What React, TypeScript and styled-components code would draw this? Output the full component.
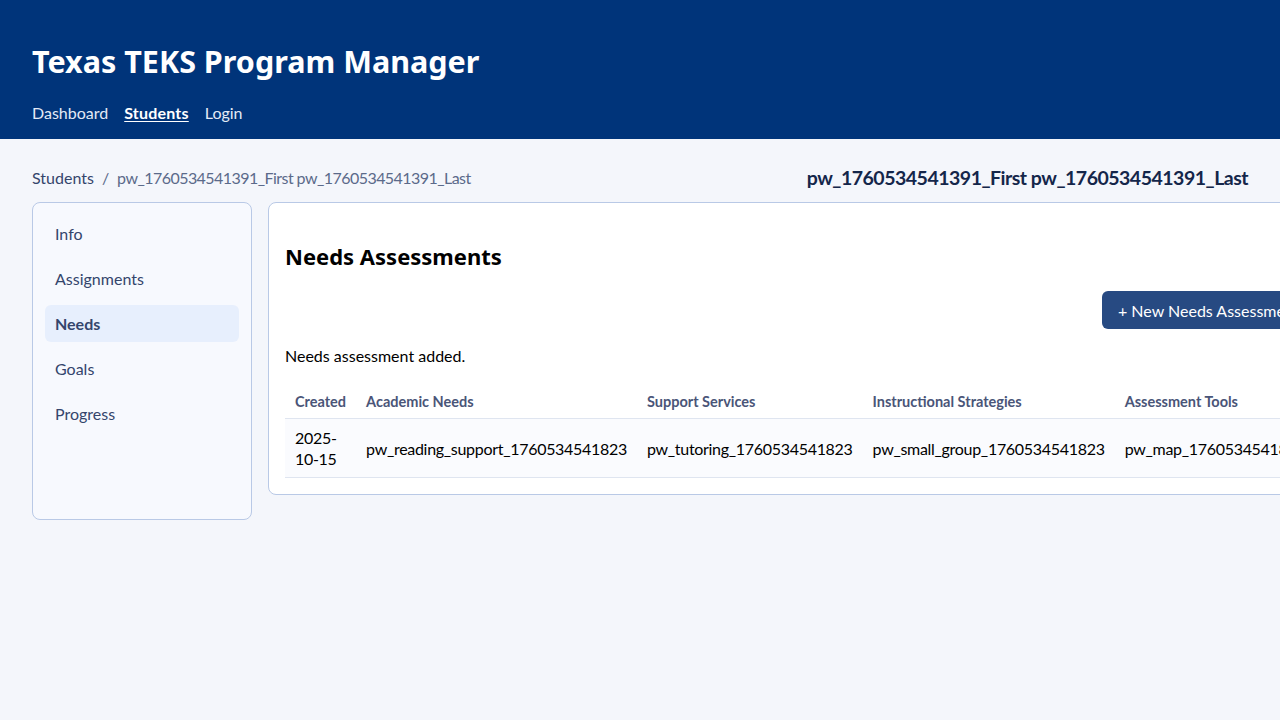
import React from "react";
import styled, { createGlobalStyle } from "styled-components";

const Global = createGlobalStyle`
  html, body { margin: 0; padding: 0; overflow-x: hidden; }
  body {
    background: #f4f6fb;
    font-family: "Segoe UI", Lato, "Noto Sans", sans-serif;
    color: #000;
  }
  * { box-sizing: border-box; }
`;

const Header = styled.header`
  background: #00347a;
  color: #fff;
  padding: 41px 32px 15px;
`;

const Title = styled.h1`
  margin: 0 0 21px;
  font-family: "Segoe UI", "Noto Sans", sans-serif;
  font-size: 30.5px;
  line-height: 40px;
  font-weight: 700;
`;

const Nav = styled.nav`
  display: flex;
  gap: 16px;
  font-size: 16px;
  line-height: 22px;
`;

const NavLink = styled.a<{ $active?: boolean }>`
  color: ${(p) => (p.$active ? "#fff" : "#e3eaf6")};
  text-decoration: ${(p) => (p.$active ? "underline" : "none")};
  text-underline-offset: 2px;
  font-weight: ${(p) => (p.$active ? 700 : 400)};
  letter-spacing: ${(p) => (p.$active ? "0.2px" : "0")};
`;

const Container = styled.div`
  padding: 24px 32px;
`;

const TopRow = styled.div`
  display: flex;
  justify-content: space-between;
  align-items: center;
  height: 28px;
  margin-bottom: 11px;
`;

const Crumbs = styled.div`
  display: flex;
  gap: 8px;
  font-size: 16px;
  color: #5b6a8a;
`;

const CrumbLink = styled.span`
  color: #34456c;
`;

const CrumbCurrent = styled.span`
  letter-spacing: -0.55px;
`;

const StudentName = styled.div`
  font-size: 19.5px;
  font-weight: 700;
  letter-spacing: -0.5px;
  color: #14264a;
`;

const Layout = styled.div`
  display: grid;
  grid-template-columns: 220px 1fr;
  gap: 16px;
  align-items: start;
`;

const Sidebar = styled.aside`
  background: #f7f9fe;
  border: 1px solid #b9c9e6;
  border-radius: 8px;
  padding: 12px;
  min-height: 318px;
  display: flex;
  flex-direction: column;
  gap: 8px;
`;

const SideItem = styled.div<{ $active?: boolean }>`
  padding: 7px 10px;
  line-height: 23px;
  font-size: 16px;
  border-radius: 6px;
  color: #34456c;
  background: ${(p) => (p.$active ? "#e7effd" : "transparent")};
  font-weight: ${(p) => (p.$active ? 700 : 400)};
`;

const Card = styled.section`
  background: #fff;
  border: 1px solid #b9c9e6;
  border-radius: 8px;
  padding: 16px;
`;

const CardTitle = styled.h2`
  margin: 21px 0 19px;
  font-family: "Segoe UI", "Noto Sans", sans-serif;
  font-size: 22px;
  line-height: 32px;
  font-weight: 700;
`;

const Actions = styled.div`
  display: flex;
  justify-content: flex-end;
  margin-bottom: 16px;
`;

const Button = styled.button`
  background: #274a82;
  color: #fff;
  border: none;
  border-radius: 6px;
  padding: 0 16px;
  height: 38px;
  font: inherit;
  font-size: 16px;
`;

const Message = styled.p`
  margin: 0 0 18px;
  font-size: 16px;
  line-height: 22px;
`;

const Table = styled.table`
  width: 100%;
  border-collapse: collapse;
`;

const Th = styled.th`
  text-align: left;
  font-size: 14.5px;
  font-weight: 700;
  color: #4a5578;
  padding: 8px 10px;
  line-height: 17px;
  border-bottom: 1px solid #dfe5f0;
`;

const Td = styled.td`
  font-size: 16px;
  line-height: 21px;
  letter-spacing: -0.3px;
  padding: 8px 10px;
  background: #fafbfe;
  border-bottom: 1px solid #dfe5f0;
`;

export default function App() {
  const side = ["Info", "Assignments", "Needs", "Goals", "Progress"];
  return (
    <>
      <Global />
      <Header>
        <Title>Texas TEKS Program Manager</Title>
        <Nav>
          <NavLink>Dashboard</NavLink>
          <NavLink $active>Students</NavLink>
          <NavLink>Login</NavLink>
        </Nav>
      </Header>
      <Container>
        <TopRow>
          <Crumbs>
            <CrumbLink>Students</CrumbLink>
            <span>/</span>
            <CrumbCurrent>pw_1760534541391_First pw_1760534541391_Last</CrumbCurrent>
          </Crumbs>
          <StudentName>pw_1760534541391_First pw_1760534541391_Last</StudentName>
        </TopRow>
        <Layout>
          <Sidebar>
            {side.map((s) => (
              <SideItem key={s} $active={s === "Needs"}>
                {s}
              </SideItem>
            ))}
          </Sidebar>
          <Card>
            <CardTitle>Needs Assessments</CardTitle>
            <Actions>
              <Button>+ New Needs Assessment</Button>
            </Actions>
            <Message>Needs assessment added.</Message>
            <Table>
              <thead>
                <tr>
                  <Th>Created</Th>
                  <Th>Academic Needs</Th>
                  <Th>Support Services</Th>
                  <Th>Instructional Strategies</Th>
                  <Th>Assessment Tools</Th>
                </tr>
              </thead>
              <tbody>
                <tr>
                  <Td>2025-10-15</Td>
                  <Td>pw_reading_support_1760534541823</Td>
                  <Td>pw_tutoring_1760534541823</Td>
                  <Td>pw_small_group_1760534541823</Td>
                  <Td>pw_map_1760534541823</Td>
                </tr>
              </tbody>
            </Table>
          </Card>
        </Layout>
      </Container>
    </>
  );
}
